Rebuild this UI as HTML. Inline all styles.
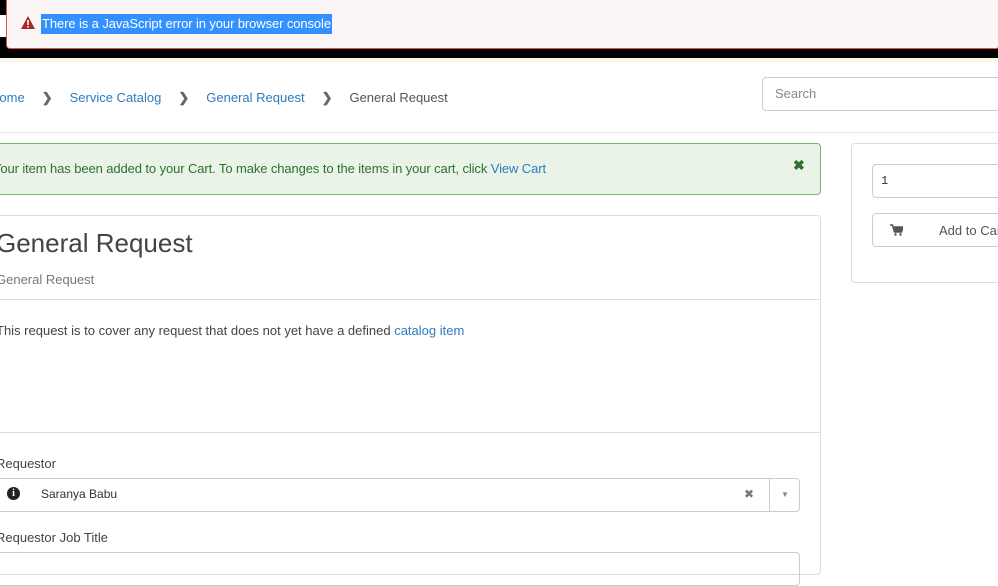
<!DOCTYPE html>
<html><head><style>
*{box-sizing:border-box;margin:0;padding:0}
body{width:998px;height:559px;overflow:hidden;background:#fff;font-family:"Source Sans Pro","Liberation Sans",sans-serif;font-size:13px;color:#333;position:relative}
.a{position:absolute}
a,.lk{color:#2e7bbf}
</style></head><body>
<div class="a" style="left:0;top:0;width:998px;height:58px;background:#000"></div>
<div class="a" style="left:0;top:15px;width:8px;height:22px;background:#fff"></div>
<div class="a" style="left:0;top:58px;width:998px;height:4px;background:#f8f8e8"></div>
<div class="a" style="left:6px;top:0;width:994px;height:49px;background:#fdf6f6;border:1px solid #d9534f;border-top:none;border-radius:0 0 4px 4px"></div>
<svg class="a" style="left:21px;top:16px" width="14" height="13" viewBox="0 0 14 13"><path d="M7 0L14 13H0Z" fill="#a52a2a"/><rect x="6.2" y="4" width="1.6" height="5" fill="#fff"/><rect x="6.2" y="10" width="1.6" height="1.6" fill="#fff"/></svg>
<div class="a" style="left:41px;top:14px;height:20px;line-height:20px;background:#3391ff;color:#fff;font-size:13px;padding:0 1px;letter-spacing:-0.1px">There is a JavaScript error in your browser console</div>

<div class="a" style="left:-10px;top:89px;font-size:13px;line-height:18px;white-space:nowrap">
<span class="lk">Home</span><span style="color:#666;font-weight:bold;margin:0 17px">&#x276F;</span><span class="lk">Service Catalog</span><span style="color:#666;font-weight:bold;margin:0 17px">&#x276F;</span><span class="lk">General Request</span><span style="color:#666;font-weight:bold;margin:0 17px">&#x276F;</span><span style="color:#555">General Request</span></div>
<div class="a" style="left:762px;top:77px;width:250px;height:34px;border:1px solid #ccc;border-radius:4px;padding:8px 12px;color:#888">Search</div>
<div class="a" style="left:0;top:132px;width:998px;height:1px;background:#e3e6e8"></div>

<div class="a" style="left:-20px;top:143px;width:841px;height:52px;background:#e9f3e8;border:1px solid #6cbf61;border-radius:4px;color:#2f6f2f;padding:17px 0 0 12px;letter-spacing:-0.1px">Your item has been added to your Cart. To make changes to the items in your cart, click <span class="lk">View Cart</span></div>
<div class="a" style="left:793px;top:157px;color:#2f6f2f;font-weight:bold;font-size:14px">&#x2716;</div>

<div class="a" style="left:-10px;top:215px;width:831px;height:360px;border:1px solid #ddd;border-radius:4px"></div>
<div class="a" style="left:-4px;top:228px;font-size:26px;font-weight:300;color:#444">General Request</div>
<div class="a" style="left:-4px;top:272px;color:#777">General Request</div>
<div class="a" style="left:0;top:299px;width:820px;height:1px;background:#ddd"></div>
<div class="a" style="left:-4px;top:323px;color:#444">This request is to cover any request that does not yet have a defined <span class="lk">catalog item</span></div>
<div class="a" style="left:0;top:432px;width:820px;height:1px;background:#ddd"></div>
<div class="a" style="left:-4px;top:456px;color:#444">Requestor</div>
<div class="a" style="left:-10px;top:478px;width:810px;height:34px;border:1px solid #ccc;border-radius:4px"></div>
<div class="a" style="left:7px;top:487px;width:13px;height:13px;border-radius:50%;background:#222;color:#fff;font-size:10px;font-weight:bold;text-align:center;line-height:13px;font-family:'Liberation Serif',serif">i</div>
<div class="a" style="left:41px;top:487px;font-size:12px;color:#333">Saranya Babu</div>
<div class="a" style="left:744px;top:487px;color:#777;font-size:12px">&#x2716;</div>
<div class="a" style="left:769px;top:479px;width:1px;height:32px;background:#ccc"></div>
<div class="a" style="left:781px;top:490px;color:#888;font-size:8px">&#x25BC;</div>
<div class="a" style="left:-4px;top:530px;color:#444">Requestor Job Title</div>
<div class="a" style="left:-10px;top:552px;width:810px;height:34px;border:1px solid #ccc;border-radius:4px"></div>

<div class="a" style="left:851px;top:143px;width:160px;height:140px;border:1px solid #ddd;border-radius:4px"></div>
<div class="a" style="left:872px;top:164px;width:140px;height:34px;border:1px solid #ccc;border-radius:4px;padding:9px 8px;font-size:12px;font-family:'Liberation Mono',monospace">1</div>
<div class="a" style="left:872px;top:213px;width:140px;height:34px;border:1px solid #ccc;border-radius:4px;padding:9px 0 0 66px;color:#555">Add to Cart</div>
<svg class="a" style="left:890px;top:224px" width="13" height="12" viewBox="0 0 13 12"><path d="M0 1h2.5l2 7h7l1.5-5H4" fill="none" stroke="#555" stroke-width="1.6"/><path d="M4 3h9l-1.5 5H5z" fill="#555"/><circle cx="5.5" cy="10.5" r="1.2" fill="#555"/><circle cx="10.5" cy="10.5" r="1.2" fill="#555"/></svg>
</body></html>
